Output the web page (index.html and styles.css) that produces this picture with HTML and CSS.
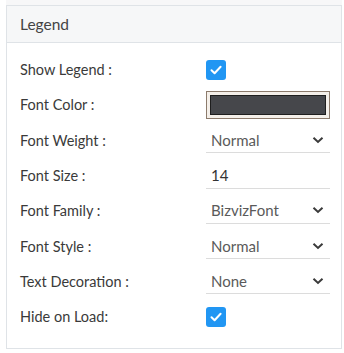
FILE: index.html
```html
<!DOCTYPE html>
<html lang="en">
<head>
    <meta charset="UTF-8">
    <title>Legend</title>
    <link rel="stylesheet" href="styles.css">
</head>
<body>
    <div class="top-strip"></div>

    <div class="panel">
        <div class="panel-header">Legend</div>

        <div class="panel-body">
            <div class="row">
                <label class="row-label">Show Legend :</label>
                <div class="control">
                    <span class="checkbox">
                        <svg width="14" height="14" viewBox="0 0 14 14"><path d="M2.5 7.2 L5.6 10.2 L11.6 3.8" fill="none" stroke="#fff" stroke-width="2" stroke-linecap="round" stroke-linejoin="round"/></svg>
                    </span>
                </div>
            </div>

            <div class="row">
                <label class="row-label">Font Color :</label>
                <div class="control">
                    <span class="color-box"><span class="swatch"></span></span>
                </div>
            </div>

            <div class="row">
                <label class="row-label">Font Weight :</label>
                <div class="control">
                    <div class="select">
                        <span>Normal</span>
                        <svg class="chevron" width="12" height="8" viewBox="0 0 12 8"><path d="M1.5 1.8 L6 6 L10.5 1.8" fill="none" stroke="#3a3a3a" stroke-width="2"/></svg>
                    </div>
                </div>
            </div>

            <div class="row">
                <label class="row-label">Font Size :</label>
                <div class="control">
                    <div class="select input-val"><span>14</span></div>
                </div>
            </div>

            <div class="row">
                <label class="row-label">Font Family :</label>
                <div class="control">
                    <div class="select">
                        <span>BizvizFont</span>
                        <svg class="chevron" width="12" height="8" viewBox="0 0 12 8"><path d="M1.5 1.8 L6 6 L10.5 1.8" fill="none" stroke="#3a3a3a" stroke-width="2"/></svg>
                    </div>
                </div>
            </div>

            <div class="row">
                <label class="row-label">Font Style :</label>
                <div class="control">
                    <div class="select">
                        <span>Normal</span>
                        <svg class="chevron" width="12" height="8" viewBox="0 0 12 8"><path d="M1.5 1.8 L6 6 L10.5 1.8" fill="none" stroke="#3a3a3a" stroke-width="2"/></svg>
                    </div>
                </div>
            </div>

            <div class="row">
                <label class="row-label">Text Decoration :</label>
                <div class="control">
                    <div class="select">
                        <span>None</span>
                        <svg class="chevron" width="12" height="8" viewBox="0 0 12 8"><path d="M1.5 1.8 L6 6 L10.5 1.8" fill="none" stroke="#3a3a3a" stroke-width="2"/></svg>
                    </div>
                </div>
            </div>

            <div class="row">
                <label class="row-label">Hide on Load:</label>
                <div class="control">
                    <span class="checkbox">
                        <svg width="14" height="14" viewBox="0 0 14 14"><path d="M2.5 7.2 L5.6 10.2 L11.6 3.8" fill="none" stroke="#fff" stroke-width="2" stroke-linecap="round" stroke-linejoin="round"/></svg>
                    </span>
                </div>
            </div>
        </div>
    </div>
</body>
</html>
```

FILE: styles.css
```css
body {
    font-family: 'Lato', 'Noto Sans', sans-serif;
    background: #ffffff;
    margin: 0;
    padding: 0;
    color: #3c3c3c;
}

.top-strip {
    height: 5px;
    margin-left: 6px;
    margin-right: 2px;
    background: #f7f7f8;
}

.panel {
    margin-left: 6px;
    margin-right: 2px;
    height: 344px;
    box-sizing: border-box;
    border: 1px solid #dfe3e7;
    background: white;
}

.panel-header {
    height: 37px;
    box-sizing: border-box;
    padding: 0 13px;
    display: flex;
    align-items: center;
    background: #f6f7f8;
    border-bottom: 1px solid #dfe3e7;
    font-size: 15.5px;
    color: #444;
}

.panel-body {
    padding-top: 9px;
}

.row {
    height: 35.3px;
    display: flex;
    align-items: center;
    padding-left: 13px;
}

.row-label {
    width: 186px;
    font-size: 14.5px;
    color: #3a3a3a;
}

.control {
    width: 124px;
    display: flex;
    align-items: center;
}

.checkbox {
    width: 20px;
    height: 20px;
    border-radius: 3px;
    background: #2196f3;
    display: flex;
    align-items: center;
    justify-content: center;
}

.color-box {
    width: 124px;
    height: 28px;
    box-sizing: border-box;
    border: 1px solid #8c7b6c;
    background: #f4efe9;
    padding: 3px;
    display: flex;
}

.swatch {
    flex: 1;
    background: #46474b;
    border: 1px solid #1e1e1e;
}

.select {
    width: 124px;
    height: 26px;
    box-sizing: border-box;
    border-bottom: 1px solid #dcdcdc;
    display: flex;
    align-items: center;
    justify-content: space-between;
    padding: 0 5px;
    font-size: 15px;
    color: #5a5a5a;
}

.input-val {
    color: #333;
}

.chevron {
    margin-right: 1px;
}
```
